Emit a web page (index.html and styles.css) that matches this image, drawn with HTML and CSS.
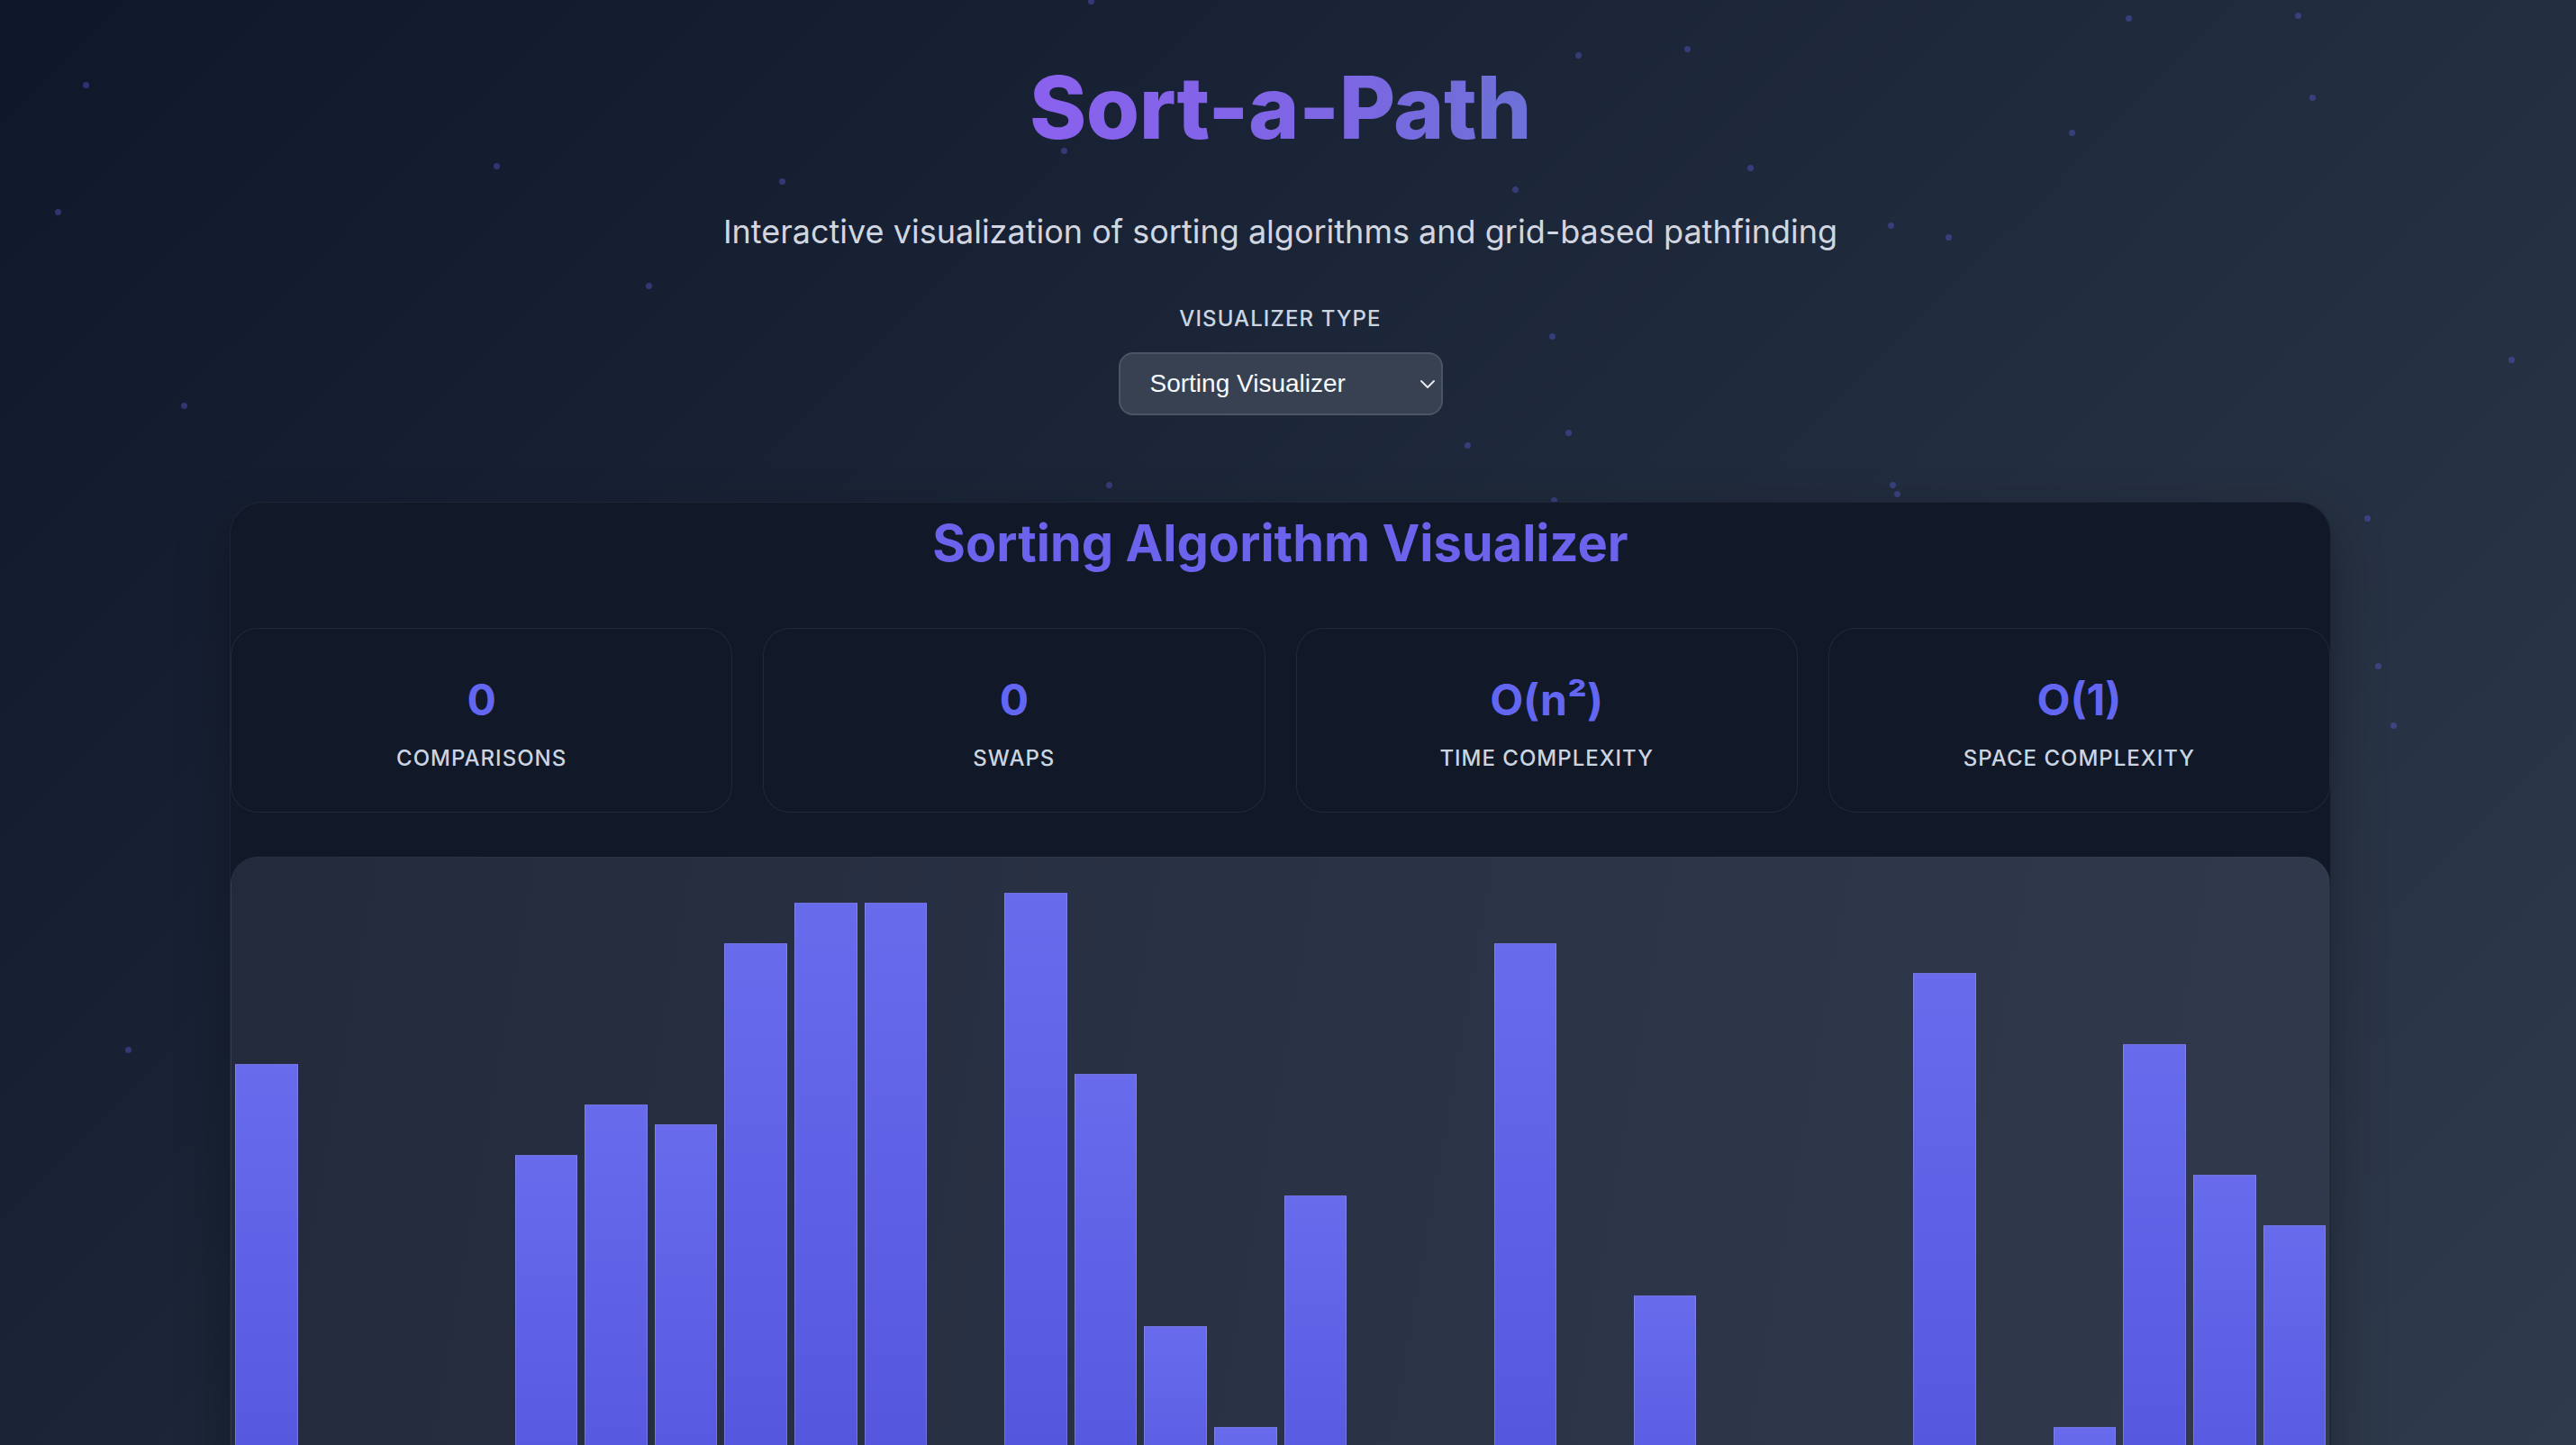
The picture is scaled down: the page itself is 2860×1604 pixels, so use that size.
FILE: index.html
```html
<!DOCTYPE html>
<html lang="en">
<head>
<meta charset="utf-8">
<title>Sort-a-Path</title>
<link rel="stylesheet" href="styles.css">
</head>
<body>
<div class="stars" aria-hidden="true">
  <span class="star" style="left:92px;top:91px"></span>
  <span class="star" style="left:548px;top:181px"></span>
  <span class="star" style="left:61px;top:232px"></span>
  <span class="star" style="left:865px;top:198px"></span>
  <span class="star" style="left:717px;top:314px"></span>
  <span class="star" style="left:201px;top:447px"></span>
  <span class="star" style="left:1228px;top:535px"></span>
  <span class="star" style="left:139px;top:1162px"></span>
  <span class="star" style="left:1249px;top:425px"></span>
  <span class="star" style="left:1178px;top:164px"></span>
  <span class="star" style="left:1208px;top:-2px"></span>
  <span class="star" style="left:1749px;top:58px"></span>
  <span class="star" style="left:1870px;top:51px"></span>
  <span class="star" style="left:2360px;top:17px"></span>
  <span class="star" style="left:2548px;top:14px"></span>
  <span class="star" style="left:2564px;top:105px"></span>
  <span class="star" style="left:2297px;top:144px"></span>
  <span class="star" style="left:1940px;top:183px"></span>
  <span class="star" style="left:1679px;top:207px"></span>
  <span class="star" style="left:2096px;top:247px"></span>
  <span class="star" style="left:2160px;top:260px"></span>
  <span class="star" style="left:2785px;top:396px"></span>
  <span class="star" style="left:1720px;top:370px"></span>
  <span class="star" style="left:1738px;top:477px"></span>
  <span class="star" style="left:1626px;top:491px"></span>
  <span class="star" style="left:2098px;top:535px"></span>
  <span class="star" style="left:2103px;top:545px"></span>
  <span class="star" style="left:1722px;top:552px"></span>
  <span class="star" style="left:2625px;top:572px"></span>
  <span class="star" style="left:2637px;top:736px"></span>
  <span class="star" style="left:2654px;top:802px"></span>
</div>

<div class="app">
  <header class="header">
    <h1 class="title">Sort-a-Path</h1>
    <p class="subtitle">Interactive visualization of sorting algorithms and grid-based pathfinding</p>
    <label class="type-label" for="vtype">VISUALIZER TYPE</label>
    <div class="select-wrap">
      <select id="vtype" class="type-select">
        <option>Sorting Visualizer</option>
        <option>Pathfinding Visualizer</option>
      </select>
      <svg class="chevron" viewBox="0 0 18 11" width="18" height="11"><path d="M2 2 L9 9 L16 2" fill="none" stroke="#e5e7eb" stroke-width="2" stroke-linecap="round" stroke-linejoin="round"/></svg>
    </div>
  </header>

  <section class="card">
    <h2 class="card-title">Sorting Algorithm Visualizer</h2>
    <div class="stats">
      <div class="stat"><div class="stat-value">0</div><div class="stat-label">COMPARISONS</div></div>
      <div class="stat"><div class="stat-value">0</div><div class="stat-label">SWAPS</div></div>
      <div class="stat"><div class="stat-value">O(n²)</div><div class="stat-label">TIME COMPLEXITY</div></div>
      <div class="stat"><div class="stat-value">O(1)</div><div class="stat-label">SPACE COMPLEXITY</div></div>
    </div>
    <div class="viz">
      <div class="bar" style="height:589px"></div>
      <div class="bar" style="height:60px"></div>
      <div class="bar" style="height:120px"></div>
      <div class="bar" style="height:90px"></div>
      <div class="bar" style="height:488px"></div>
      <div class="bar" style="height:544px"></div>
      <div class="bar" style="height:522px"></div>
      <div class="bar" style="height:723px"></div>
      <div class="bar" style="height:768px"></div>
      <div class="bar" style="height:768px"></div>
      <div class="bar" style="height:100px"></div>
      <div class="bar" style="height:779px"></div>
      <div class="bar" style="height:578px"></div>
      <div class="bar" style="height:298px"></div>
      <div class="bar" style="height:186px"></div>
      <div class="bar" style="height:443px"></div>
      <div class="bar" style="height:140px"></div>
      <div class="bar" style="height:70px"></div>
      <div class="bar" style="height:723px"></div>
      <div class="bar" style="height:110px"></div>
      <div class="bar" style="height:332px"></div>
      <div class="bar" style="height:50px"></div>
      <div class="bar" style="height:130px"></div>
      <div class="bar" style="height:80px"></div>
      <div class="bar" style="height:690px"></div>
      <div class="bar" style="height:150px"></div>
      <div class="bar" style="height:186px"></div>
      <div class="bar" style="height:611px"></div>
      <div class="bar" style="height:466px"></div>
      <div class="bar" style="height:410px"></div>
    </div>
  </section>
</div>
</body>
</html>
```

FILE: styles.css
```css
* { box-sizing: border-box; }

html, body {
  margin: 0;
  padding: 0;
}

body {
  height: 100vh;
  overflow: hidden;
  position: relative;
  font-family: Inter, "Noto Sans", "Liberation Sans", sans-serif;
  color: #cbd5e1;
  background: linear-gradient(135deg, #0f172a 0%, #1e293b 50%, #2f3a4c 100%);
}

.stars {
  position: absolute;
  inset: 0;
  z-index: 0;
  pointer-events: none;
}

.star {
  position: absolute;
  width: 7px;
  height: 7px;
  border-radius: 50%;
  background: rgba(99, 102, 241, 0.35);
}

.app {
  width: 2333px;
  margin-left: 255px;
  padding-top: 62px;
}

.header {
  display: flex;
  flex-direction: column;
  align-items: center;
}

.title {
  margin: 0;
  font-size: 96px;
  line-height: 1.2;
  font-weight: 800;
  letter-spacing: -0.5px;
  background: linear-gradient(90deg, #8a61ee 0%, #7d66e4 60%, #6c71d6 100%);
  -webkit-background-clip: text;
  background-clip: text;
  color: transparent;
}

.subtitle {
  margin: 53px 0 0;
  font-size: 36px;
  line-height: 1.5;
  font-weight: 400;
  color: #d1d6e0;
}

.type-label {
  margin-top: 56px;
  font-size: 24px;
  line-height: 1.2;
  font-weight: 500;
  letter-spacing: 1.1px;
  color: #cbd5e1;
}

.select-wrap {
  position: relative;
  margin-top: 22px;
  width: 360px;
  height: 70px;
}

.type-select {
  appearance: none;
  -webkit-appearance: none;
  width: 100%;
  height: 100%;
  padding: 0 40px 0 33px;
  border: 2px solid #4b5563;
  border-radius: 16px;
  background: #374151;
  color: #f8fafc;
  font-family: "Liberation Sans", Arial, sans-serif;
  font-size: 28px;
  font-weight: 400;
}

.chevron {
  position: absolute;
  right: 8px;
  top: 30px;
}

.card {
  position: relative;
  z-index: 1;
  margin-top: 96px;
  padding-top: 8px;
  background: #111827;
  border: 1px solid rgba(255, 255, 255, 0.06);
  border-radius: 36px;
  box-shadow: 0 25px 60px rgba(0, 0, 0, 0.3);
}

.card-title {
  margin: 0;
  text-align: center;
  font-size: 56px;
  line-height: 1.2;
  font-weight: 700;
  color: #6b63ec;
  padding-top: 4px;
}

.stats {
  margin-top: 60px;
  display: grid;
  grid-template-columns: repeat(4, 1fr);
  gap: 34px;
}

.stat {
  height: 205px;
  padding-top: 50px;
  text-align: center;
  background: #111827;
  border: 1px solid rgba(255, 255, 255, 0.07);
  border-radius: 30px;
}

.stat-value {
  font-size: 48px;
  line-height: 1.2;
  font-weight: 700;
  color: #6366f1;
}

.stat-label {
  margin-top: 22px;
  font-size: 24px;
  line-height: 1.2;
  font-weight: 500;
  letter-spacing: 1px;
  color: #cbd5e1;
}

.viz {
  margin-top: 49px;
  height: 820px;
  display: flex;
  align-items: flex-end;
  border: 1px solid rgba(255, 255, 255, 0.02);
  border-radius: 30px;
  background: linear-gradient(100deg, #222a3c 0%, #2a3345 50%, #303a4c 100%);
}

.bar {
  flex: 1;
  margin: 0 4px;
  background: linear-gradient(180deg, #676bec 0%, #5759e0 70%, #4f4fd8 100%);
  border: 1px solid rgba(170, 175, 230, 0.35);
  border-bottom: none;
}
```
